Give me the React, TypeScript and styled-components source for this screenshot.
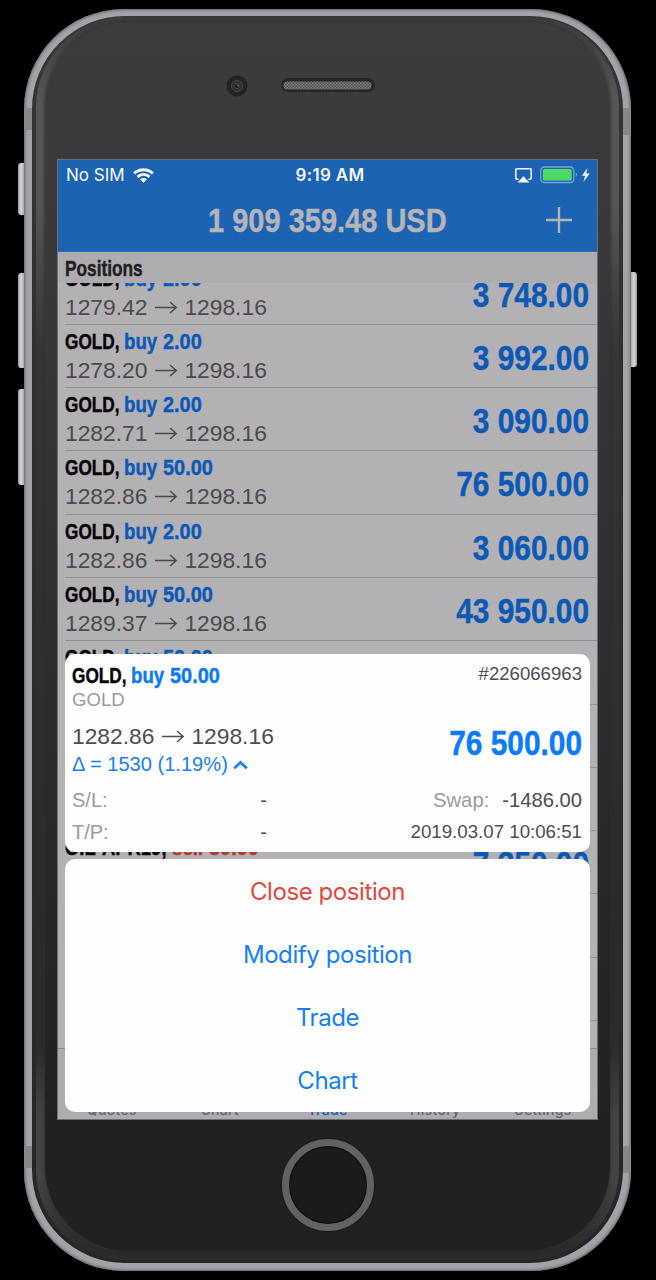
import React from "react";
import styled, { createGlobalStyle } from "styled-components";

const Global = createGlobalStyle`
  * { box-sizing: border-box; }
  html, body { margin: 0; background: #000; }
  body { width: 656px; height: 1280px; overflow: hidden; font-family: "Liberation Sans", Arial, sans-serif; }
`;

const Stage = styled.main`
  width: 656px;
  height: 1280px;
  padding: 9px 0 0 24px;
  background: #000;
`;

const Phone = styled.div`
  position: relative;
  width: 607px;
  height: 1262px;
  padding: 7px 8px 8px;
  border-radius: 100px;
  background: #a3a2a8;
  box-shadow: inset 0 0 3px 1px #66656a;
`;

const Key = styled.i<{ $side: "left" | "right"; $top: number; $height: number }>`
  position: absolute;
  ${(p) => p.$side}: -6px;
  top: ${(p) => p.$top}px;
  width: 6px;
  height: ${(p) => p.$height}px;
  border-radius: ${(p) => (p.$side === "left" ? "3px 0 0 3px" : "0 3px 3px 0")};
  background: linear-gradient(${(p) => (p.$side === "left" ? "90deg" : "270deg")}, #98979a, #dcdbdc 50%, #a8a7a9);
`;

const Antenna = styled.i<{ $side: "left" | "right"; $top: number; $height: number }>`
  position: absolute;
  ${(p) => p.$side}: 0;
  top: ${(p) => p.$top}px;
  width: 8px;
  height: ${(p) => p.$height}px;
  background: #858889;
`;

const Rim = styled.div`
  height: 100%;
  padding: 1px 4px 3px;
  border-radius: 93px;
  background: linear-gradient(#353535, #2b2b2b 60%, #262626);
`;

const Bevel = styled.div`
  height: 100%;
  padding: 5px 9px 9px;
  border-radius: 90px;
  background: linear-gradient(
    #3c3c3c,
    #424242 30px,
    #565656 80px,
    #555 190px,
    #363636 330px,
    #2a2a2a 900px,
    #2c2c2c 1030px,
    #444 1100px,
    #444 1160px,
    #2b2b2b 1230px
  );
`;

const Face = styled.div`
  display: flex;
  flex-direction: column;
  align-items: center;
  height: 100%;
  border-radius: 84px;
  background: linear-gradient(#3c3c3c, #393939 18%, #282828 70%, #212121 90%);
  box-shadow: 0 0 3px 1px rgba(45, 45, 45, 0.7);
`;

const Forehead = styled.header`
  flex: none;
  width: 540px;
  height: 137px;
  display: flex;
  align-items: flex-start;
  padding: 53px 0 0 168px;
  gap: 31px;
`;

const Screen = styled.section`
  position: relative;
  flex: none;
  width: 541px;
  height: 961px;
  border: 1px solid #68707c;
  background: #b3b1b4;
  overflow: hidden;
`;

const Blue = styled.header`
  height: 91.5px;
  background: #1d63b4;
  border-bottom: 1px solid #2f6cb6;
`;

const StatusBar = styled.div`
  display: grid;
  grid-template-columns: 1fr auto 1fr;
  align-items: center;
  height: 30px;
  padding: 0 7px 0 8px;
  color: #f4f7fb;
  font: 500 17px/30px Inter, sans-serif;
`;

const Carrier = styled.span`
  display: flex;
  align-items: center;
  gap: 8px;
  font-weight: 400;
`;

const Clock = styled.span`
  font-weight: 600;
  letter-spacing: 0.3px;
  padding-left: 4px;
`;

const Power = styled.span`
  display: flex;
  align-items: center;
  justify-content: flex-end;
  gap: 8px;
`;

const NavBar = styled.div`
  display: flex;
  align-items: center;
  justify-content: flex-end;
  height: 60px;
  padding-right: 24px;
`;

const Balance = styled.h1`
  flex: 1;
  margin: 0;
  padding-left: 150px;
  height: 60px;
  color: #b5b4b7;
  font: 700 34px/60px "Liberation Sans", sans-serif;
`;

const Narrow = styled.span<{ $w: number; $s: number; $right?: boolean }>`
  display: inline-flex;
  justify-content: ${(p) => (p.$right ? "flex-end" : "flex-start")};
  width: ${(p) => p.$w}px;
  white-space: pre;
  transform: scaleX(${(p) => p.$s});
  transform-origin: ${(p) => (p.$right ? "right" : "left")};
  -webkit-text-stroke: 0.45px currentColor;
`;

const SectionTitle = styled.h2`
  position: relative;
  margin: 0;
  height: 31.5px;
  padding-left: 7px;
  background: #aeacaf;
  color: #1f1f23;
  font: 700 22px/33px "Liberation Sans", sans-serif;
`;

const List = styled.div`
  height: 765px;
  overflow: hidden;
`;

const Rows = styled.div`
  margin-top: -21.5px;
`;

const Row = styled.div`
  display: flex;
  justify-content: space-between;
  height: 63.3px;
  margin-left: 7px;
  padding-right: 8px;
  border-bottom: 1px solid #939195;
`;

const Instrument = styled.div`
  height: 30px;
  color: #050506;
  font: 700 22.5px/34px "Liberation Sans", sans-serif;
  white-space: nowrap;
`;

const Side = styled.span<{ $c: string }>`
  color: ${(p) => p.$c};
`;

const Quote = styled.div<{ $c: string }>`
  display: flex;
  align-items: center;
  height: 30px;
  color: ${(p) => p.$c};
  font: 400 22.8px/30px "Liberation Sans", sans-serif;

  svg { margin: 0 6px 0 7px; }
`;

const Amount = styled.div<{ $c: string; $raise?: boolean }>`
  margin-top: ${(p) => (p.$raise ? -9 : 0)}px;
  color: ${(p) => p.$c};
  font: 700 34.5px/67px "Liberation Sans", sans-serif;
`;

const TabBar = styled.nav`
  display: grid;
  grid-template-columns: repeat(5, 1fr);
  align-items: end;
  height: 71px;
  padding: 0 0 1px;
  border-top: 1px solid #8d8b8f;
  background: #aeacaf;
  color: #67666a;
  font: 500 14px/17px Inter, sans-serif;
  letter-spacing: 0.3px;
  text-align: center;
`;

const Tab = styled.span<{ $on?: boolean }>`
  color: ${(p) => (p.$on ? "#1760b5" : "inherit")};
`;

const Sheet = styled.div`
  position: absolute;
  left: 7px;
  right: 7px;
  top: 494px;
  display: flex;
  flex-direction: column;
  gap: 7px;
`;

const Panel = styled.div`
  border-radius: 10px;
  background: #fefefe;
`;

const Details = styled(Panel)`
  height: 197.5px;
  padding: 5px 8px 0 7px;
`;

const Line = styled.div<{ $h: number }>`
  display: flex;
  justify-content: space-between;
  align-items: center;
  height: ${(p) => p.$h}px;
`;

const Label = styled.span<{ $size?: number; $c?: string }>`
  color: ${(p) => p.$c ?? "#4d4d52"};
  font-size: ${(p) => p.$size ?? 20}px;
  white-space: pre;
`;

const SwapPair = styled.span`
  display: flex;
  align-items: center;
  gap: 13px;
`;

const QuoteBlock = styled.div`
  padding-top: 3px;
`;

const Delta = styled.div`
  display: flex;
  align-items: center;
  gap: 5px;
  height: 27px;
`;

const Level = styled.div`
  display: flex;
  justify-content: space-between;
  align-items: center;
  width: 195px;
`;

const Actions = styled(Panel)`
  height: 253px;
  display: grid;
  grid-template-rows: repeat(4, 1fr);
`;

const Action = styled.button<{ $danger?: boolean }>`
  border: 0;
  background: none;
  padding: 2px 0 0;
  color: ${(p) => (p.$danger ? "#e2483c" : "#157efb")};
  font: 400 24px/61px Inter, sans-serif;
  letter-spacing: -0.42px;
`;

const Chin = styled.footer`
  padding-top: 19px;
`;

const HomeButton = styled.div`
  width: 92px;
  height: 92px;
  border: 7px solid #626262;
  border-radius: 50%;
  background: #1b1b1b;
  box-shadow: 0 0 1px 1px #1a1a1a, inset 0 0 1px 1px #0b0b0b;
`;

const Arrow = () => (
  <svg width="24" height="16" viewBox="0 0 24 16" fill="none" stroke="currentColor" strokeWidth="1.500">
    <path d="M1 8.500h21M16 3l6.200 5.500L16 14" />
  </svg>
);

const WifiIcon = () => (
  <svg width="21" height="15" viewBox="0 0 21 15" fill="none" stroke="currentColor" strokeWidth="2.900">
    <path d="M1.200 5.300C6.500.6 14.500.6 19.800 5.300" />
    <path d="M4.500 8.800c3.600-3.100 8.400-3.100 12 0" />
    <path d="M10.500 14.800l-3.400-3.500c2-1.700 4.800-1.700 6.800 0z" fill="currentColor" stroke="none" />
  </svg>
);

const AirplayIcon = () => (
  <svg width="17" height="15" viewBox="0 0 17 15" fill="none" stroke="currentColor" strokeWidth="1.500">
    <path d="M3.600 11.300H1.800Q.8 11.300.8 10.300V1.800Q.8.800 1.800.8h13.400q1 0 1 1v8.500q0 1-1 1H13.400" />
    <path d="M8.500 8.200l6 6.300H2.500z" fill="currentColor" stroke="none" />
  </svg>
);

const BatteryIcon = () => (
  <svg width="50" height="18" viewBox="0 0 50 18">
    <rect x=".8" y="1" width="33" height="15.500" rx="3.500" fill="none" stroke="#78a2d6" strokeWidth="1.300" />
    <rect x="2.800" y="3" width="29" height="11.500" rx="1.500" fill="#4cd964" />
    <path d="M35.800 6.300c1.800.8 1.800 4 0 4.800z" fill="#78a2d6" />
    <path d="M47.500 2l-5.500 7.800h3.200L43.300 16l6.400-8.400h-3.500z" fill="#f4f7fb" />
  </svg>
);

const PlusIcon = () => (
  <svg width="28" height="28" viewBox="0 0 28 28" stroke="#b5b4b7" strokeWidth="2.400">
    <path d="M14 1v26M1 14h26" />
  </svg>
);

const CaretUp = () => (
  <svg width="15" height="10" viewBox="0 0 15 10" fill="none" stroke="#1a80f5" strokeWidth="2.800">
    <path d="M1.200 8.200l6.300-5.700l6.300 5.700" />
  </svg>
);

const Camera = () => (
  <svg width="22" height="22" viewBox="0 0 22 22">
    <circle cx="11" cy="11" r="10.500" fill="#232323" />
    <circle cx="11" cy="11" r="5.500" fill="#303030" stroke="#484848" strokeWidth="1" />
    <circle cx="11" cy="11" r="2.600" fill="#202020" stroke="#484848" strokeWidth=".8" />
    <circle cx="12" cy="10.300" r=".9" fill="#6a6a6a" />
  </svg>
);

const Speaker = () => (
  <svg width="98" height="20" viewBox="0 0 98 20">
    <defs>
      <pattern id="mesh" width="3" height="3" patternUnits="userSpaceOnUse">
        <rect width="3" height="3" fill="#858585" />
        <path d="M0 0h1.500v1.500H0zM1.500 1.500H3V3H1.500z" fill="#4a4a4a" />
      </pattern>
    </defs>
    <rect x="2" y="3" width="94" height="14" rx="7" fill="#272727" />
    <rect x="4.500" y="6.500" width="88" height="8" rx="4" fill="url(#mesh)" />
  </svg>
);

type Position = { symbol: string; action: string; volume: string; open: string; now: string; profit: string };

const gold = (volume: string, open: string, profit: string): Position => ({
  symbol: "GOLD",
  action: "buy",
  volume,
  open,
  now: "1298.16",
  profit,
});

const positions: (Position | null)[] = [
  gold("2.00", "1279.42", "3 748.00"),
  gold("2.00", "1278.20", "3 992.00"),
  gold("2.00", "1282.71", "3 090.00"),
  gold("50.00", "1282.86", "76 500.00"),
  gold("2.00", "1282.86", "3 060.00"),
  gold("50.00", "1289.37", "43 950.00"),
  gold("50.00", "", ""),
  null,
  null,
  { symbol: "OIL-APR19", action: "sell", volume: "50.00", open: "", now: "", profit: "7 350.00" },
  null,
  null,
  null,
];

const InstrumentLine = ({ p, tint }: { p: Position; tint: string }) => {
  const short = p.symbol === "GOLD";
  return (
    <Instrument>
      <Narrow $w={short ? 59 : 107} $s={short ? 0.765 : 0.82}>{p.symbol},</Narrow>
      <Side $c={tint}>
        <Narrow $w={short ? 38.5 : 37} $s={0.83}>{p.action}</Narrow>
        <Narrow $w={52} $s={0.885}>{p.volume}</Narrow>
      </Side>
    </Instrument>
  );
};

const QuoteLine = ({ p, color }: { p: Position; color: string }) => (
  <Quote $c={color}>
    {p.open}
    <Arrow />
    {p.now}
  </Quote>
);

const selected = gold("50.00", "1282.86", "76 500.00");

export default function App() {
  return (
    <Stage>
      <Global />
      <Phone>
        <Key $side="left" $top={154} $height={52} />
        <Key $side="left" $top={264} $height={95} />
        <Key $side="left" $top={380} $height={96} />
        <Key $side="right" $top={263} $height={95} />
        <Antenna $side="left" $top={99} $height={22} />
        <Antenna $side="right" $top={99} $height={27} />
        <Antenna $side="left" $top={1137} $height={22} />
        <Antenna $side="right" $top={1137} $height={27} />
        <Rim>
          <Bevel>
            <Face>
              <Forehead>
                <Camera />
                <Speaker />
              </Forehead>
              <Screen>
                <Blue>
                  <StatusBar>
                    <Carrier>No SIM <WifiIcon /></Carrier>
                    <Clock>9:19 AM</Clock>
                    <Power>
                      <AirplayIcon />
                      <BatteryIcon />
                    </Power>
                  </StatusBar>
                  <NavBar>
                    <Balance><Narrow $w={240} $s={0.853}>1 909 359.48 USD</Narrow></Balance>
                    <PlusIcon />
                  </NavBar>
                </Blue>
                <SectionTitle><Narrow $w={80} $s={0.785}>Positions</Narrow></SectionTitle>
                <List>
                  <Rows>
                    {positions.map((p, i) => (
                      <Row key={i}>
                        {p && (
                          <>
                            <div>
                              <InstrumentLine p={p} tint={p.action === "sell" ? "#b53530" : "#0b59b5"} />
                              {p.open && <QuoteLine p={p} color="#4b4a4e" />}
                            </div>
                            <Amount $c="#0b59b5"><Narrow $w={140} $s={0.865} $right>{p.profit}</Narrow></Amount>
                          </>
                        )}
                      </Row>
                    ))}
                  </Rows>
                </List>
                <TabBar>
                  <Tab>Quotes</Tab>
                  <Tab>Chart</Tab>
                  <Tab $on>Trade</Tab>
                  <Tab>History</Tab>
                  <Tab>Settings</Tab>
                </TabBar>
                <Sheet>
                  <Details>
                    <Line $h={30}>
                      <InstrumentLine p={selected} tint="#0a7bfb" />
                      <Label $size={18.6}>#226066963</Label>
                    </Line>
                    <Line $h={22}><Label $size={18.6} $c="#9b9b9f">GOLD</Label></Line>
                    <Line $h={74}>
                      <QuoteBlock>
                        <QuoteLine p={selected} color="#4d4d52" />
                        <Delta>
                          <Label $c="#1a80f5" $size={20.1}>Δ = 1530 (1.19%)</Label>
                          <CaretUp />
                        </Delta>
                      </QuoteBlock>
                      <Amount $c="#0a7bfb" $raise><Narrow $w={140} $s={0.865} $right>76 500.00</Narrow></Amount>
                    </Line>
                    <Line $h={31.5}>
                      <Level><Label $c="#9b9b9f">S/L:</Label><Label>-</Label></Level>
                      <SwapPair><Label $c="#9b9b9f" $size={20.3}>Swap:</Label><Label $size={20.2}>-1486.00</Label></SwapPair>
                    </Line>
                    <Line $h={31.5}>
                      <Level><Label $c="#9b9b9f">T/P:</Label><Label>-</Label></Level>
                      <Label $size={18.7}>2019.03.07 10:06:51</Label>
                    </Line>
                  </Details>
                  <Actions>
                    <Action $danger>Close position</Action>
                    <Action>Modify position</Action>
                    <Action>Trade</Action>
                    <Action>Chart</Action>
                  </Actions>
                </Sheet>
              </Screen>
              <Chin><HomeButton /></Chin>
            </Face>
          </Bevel>
        </Rim>
      </Phone>
    </Stage>
  );
}
